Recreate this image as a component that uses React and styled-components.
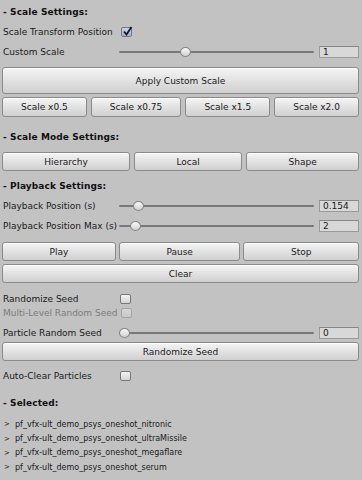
import React from "react";
import styled, { createGlobalStyle } from "styled-components";

const Global = createGlobalStyle`
  html, body {
    margin: 0;
    padding: 0;
    background: #c2c2c2;
  }
  body {
    font-family: "DejaVu Sans", Verdana, sans-serif;
    font-size: 9px;
    color: #1a1a1a;
  }
`;

const Panel = styled.div`
  width: 362px;
  height: 480px;
  box-sizing: border-box;
  padding: 2px 3px 0 2px;
  background: #c2c2c2;
  display: flex;
  flex-direction: column;
  overflow: hidden;
`;

const Header = styled.div`
  height: 20px;
  display: flex;
  align-items: center;
  padding-left: 1px;
  margin-top: ${(p) => p.$top || 0}px;
  font-weight: bold;
  letter-spacing: 0.1px;
  color: #111;
`;

const Row = styled.div`
  height: ${(p) => p.$h || 20}px;
  margin-top: ${(p) => p.$top || 0}px;
  display: flex;
  align-items: center;
`;

const Label = styled.div`
  width: ${(p) => p.$w || 116}px;
  flex: none;
  padding-left: 1px;
  white-space: nowrap;
  color: ${(p) => (p.$disabled ? "#7c7c7c" : "#1a1a1a")};
`;

const Box = styled.div`
  width: 9px;
  height: 8px;
  margin-left: ${(p) => p.$left || 1}px;
  border: 1px solid ${(p) => (p.$disabled ? "#a4a4a4" : "#777777")};
  border-radius: 2px;
  background: ${(p) =>
    p.$checked
      ? "linear-gradient(#c8d4ea, #9db1d6)"
      : p.$disabled
      ? "linear-gradient(#d6d6d6, #c8c8c8)"
      : "linear-gradient(#f4f4f4, #d4d4d4)"};
  position: relative;
  svg {
    position: absolute;
    left: 0;
    top: -2px;
  }
`;

const Track = styled.div`
  flex: 1;
  height: 12px;
  position: relative;
  &::before {
    content: "";
    position: absolute;
    left: 0;
    right: 0;
    top: 5px;
    height: 2px;
    border-radius: 1px;
    background: #787878;
  }
`;

const Thumb = styled.div`
  position: absolute;
  top: 1px;
  width: 9px;
  height: 8px;
  margin-left: -5px;
  border-radius: 50%;
  border: 1px solid #868686;
  background: linear-gradient(#fafafa, #d0d0d0);
`;

const Field = styled.div`
  flex: none;
  width: 35px;
  height: 10px;
  margin-left: 5px;
  border: 1px solid #9a9a9a;
  border-top-color: #878787;
  background: #d8d8d8;
  padding-left: 3px;
  line-height: 10px;
  font-size: 9px;
  box-sizing: content-box;
`;

const ButtonRow = styled.div`
  display: flex;
  gap: ${(p) => p.$gap || 4}px;
  margin-top: ${(p) => p.$top || 0}px;
`;

const Button = styled.div`
  flex: 1 1 auto;
  height: ${(p) => p.$h || 19}px;
  box-sizing: border-box;
  display: flex;
  align-items: center;
  justify-content: center;
  white-space: nowrap;
  border: 1px solid #8a8a8a;
  border-radius: 3px;
  background: linear-gradient(#f5f5f5, #dedede 60%, #d0d0d0);
  box-shadow: inset 0 1px 0 #ffffff;
  color: #1a1a1a;
`;

const List = styled.div`
  margin-top: 4px;
  display: flex;
  flex-direction: column;
`;

const Item = styled.div`
  height: 14.4px;
  display: flex;
  align-items: center;
  font-size: 8px;
  white-space: nowrap;
  span {
    width: 13px;
    padding-left: 2px;
    box-sizing: border-box;
    font-size: 7px;
  }
`;

const Check = ({ checked, disabled, left }) => (
  <Box $checked={checked} $disabled={disabled} $left={left}>
    {checked && (
      <svg width="11" height="11" viewBox="0 0 11 11">
        <path d="M2 5.5 L4.5 8.5 L9.5 1" fill="none" stroke="#0d1a33" strokeWidth="1.8" />
      </svg>
    )}
  </Box>
);

const thumbLeft = (pos) => ({ left: `calc(${pos} * (100% - 10px) + 5px)` });

const Slider = ({ label, value, pos, h, top }) => (
  <Row $h={h} $top={top}>
    <Label>{label}</Label>
    <Track>
      <Thumb style={thumbLeft(pos)} />
    </Track>
    <Field>{value}</Field>
  </Row>
);

const selected = [
  "pf_vfx-ult_demo_psys_oneshot_nitronic",
  "pf_vfx-ult_demo_psys_oneshot_ultraMissile",
  "pf_vfx-ult_demo_psys_oneshot_megaflare",
  "pf_vfx-ult_demo_psys_oneshot_serum",
];

export default function App() {
  return (
    <>
      <Global />
      <Panel>
        <Header>- Scale Settings:</Header>
        <Row>
          <Label $w={117}>Scale Transform Position</Label>
          <Check checked />
        </Row>
        <Slider label="Custom Scale" value="1" pos={0.33} />
        <ButtonRow $top={5}>
          <Button $h={27}>Apply Custom Scale</Button>
        </ButtonRow>
        <ButtonRow $top={3}>
          <Button $h={20}>Scale x0.5</Button>
          <Button $h={20}>Scale x0.75</Button>
          <Button $h={20}>Scale x1.5</Button>
          <Button $h={20}>Scale x2.0</Button>
        </ButtonRow>

        <Header $top={10}>- Scale Mode Settings:</Header>
        <ButtonRow $top={5}>
          <Button>Hierarchy</Button>
          <Button>Local</Button>
          <Button>Shape</Button>
        </ButtonRow>

        <Header $top={5}>- Playback Settings:</Header>
        <Slider label="Playback Position (s)" value="0.154" pos={0.075} />
        <Slider label="Playback Position Max (s)" value="2" pos={0.058} />
        <ButtonRow $top={6} $gap={3}>
          <Button>Play</Button>
          <Button>Pause</Button>
          <Button>Stop</Button>
        </ButtonRow>
        <ButtonRow $top={3}>
          <Button>Clear</Button>
        </ButtonRow>

        <Row $h={14} $top={9}>
          <Label>Randomize Seed</Label>
          <Check />
        </Row>
        <Row $h={13}>
          <Label $disabled>Multi-Level Random Seed</Label>
          <Check disabled left={2} />
        </Row>
        <Slider label="Particle Random Seed" value="0" pos={0} h={17} top={5} />
        <ButtonRow $top={1}>
          <Button>Randomize Seed</Button>
        </ButtonRow>

        <Row $h={16} $top={7}>
          <Label>Auto-Clear Particles</Label>
          <Check />
        </Row>

        <Header $top={9}>- Selected:</Header>
        <List>
          {selected.map((s) => (
            <Item key={s}>
              <span>&gt;</span>
              {s}
            </Item>
          ))}
        </List>
      </Panel>
    </>
  );
}
